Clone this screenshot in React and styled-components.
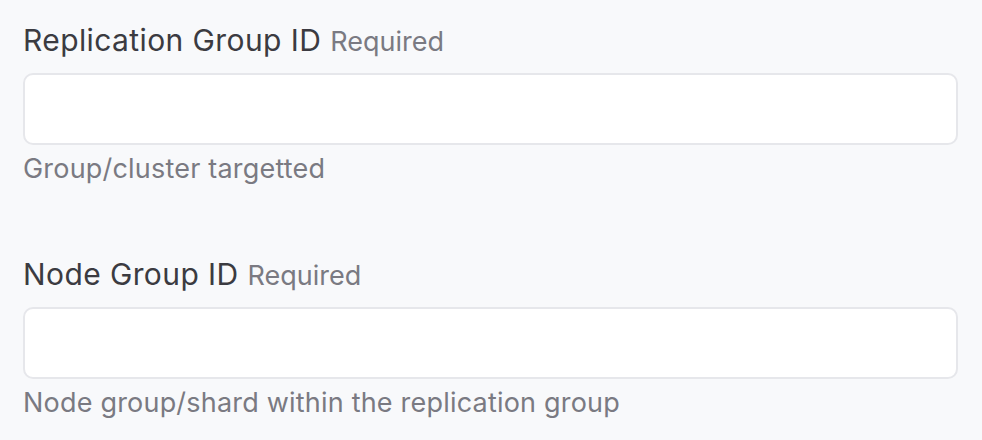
import React from 'react';
import styled, { createGlobalStyle } from 'styled-components';

const GlobalStyle = createGlobalStyle`
  html, body {
    margin: 0;
    padding: 0;
    background: #f8f9fb;
  }
  body {
    font-family: Inter, "Noto Sans", "Liberation Sans", sans-serif;
    -webkit-font-smoothing: antialiased;
  }
`;

const Form = styled.form`
  display: flex;
  flex-direction: column;
  gap: 71px;
  padding: 22px 24px 0 23px;
`;

const Field = styled.div`
  display: flex;
  flex-direction: column;
`;

const Label = styled.label`
  display: flex;
  align-items: baseline;
  gap: 9px;
  font-size: 30px;
  line-height: 36px;
  letter-spacing: 0.4px;
  color: #3b3b41;
  margin-bottom: 13px;
`;

const RequiredTag = styled.span`
  font-size: 27px;
  letter-spacing: 0;
  color: #7a7a82;
`;

const Input = styled.input`
  box-sizing: border-box;
  width: 100%;
  height: 72px;
  border: 2px solid #e6e7eb;
  border-radius: 10px;
  background: #ffffff;
  font: inherit;
  font-size: 27px;
  padding: 0 20px;
  outline: none;
`;

const Help = styled.div`
  font-size: 27px;
  line-height: 32px;
  letter-spacing: 0.2px;
  color: #7a7a82;
  margin-top: 8px;
`;

const fields = [
  { id: 'replication-group-id', label: 'Replication Group ID', help: 'Group/cluster targetted' },
  { id: 'node-group-id', label: 'Node Group ID', help: 'Node group/shard within the replication group' },
];

export default function App() {
  return (
    <>
      <GlobalStyle />
      <Form onSubmit={(e) => e.preventDefault()}>
        {fields.map((f) => (
          <Field key={f.id}>
            <Label htmlFor={f.id}>
              {f.label}
              <RequiredTag>Required</RequiredTag>
            </Label>
            <Input id={f.id} type="text" />
            <Help>{f.help}</Help>
          </Field>
        ))}
      </Form>
    </>
  );
}
